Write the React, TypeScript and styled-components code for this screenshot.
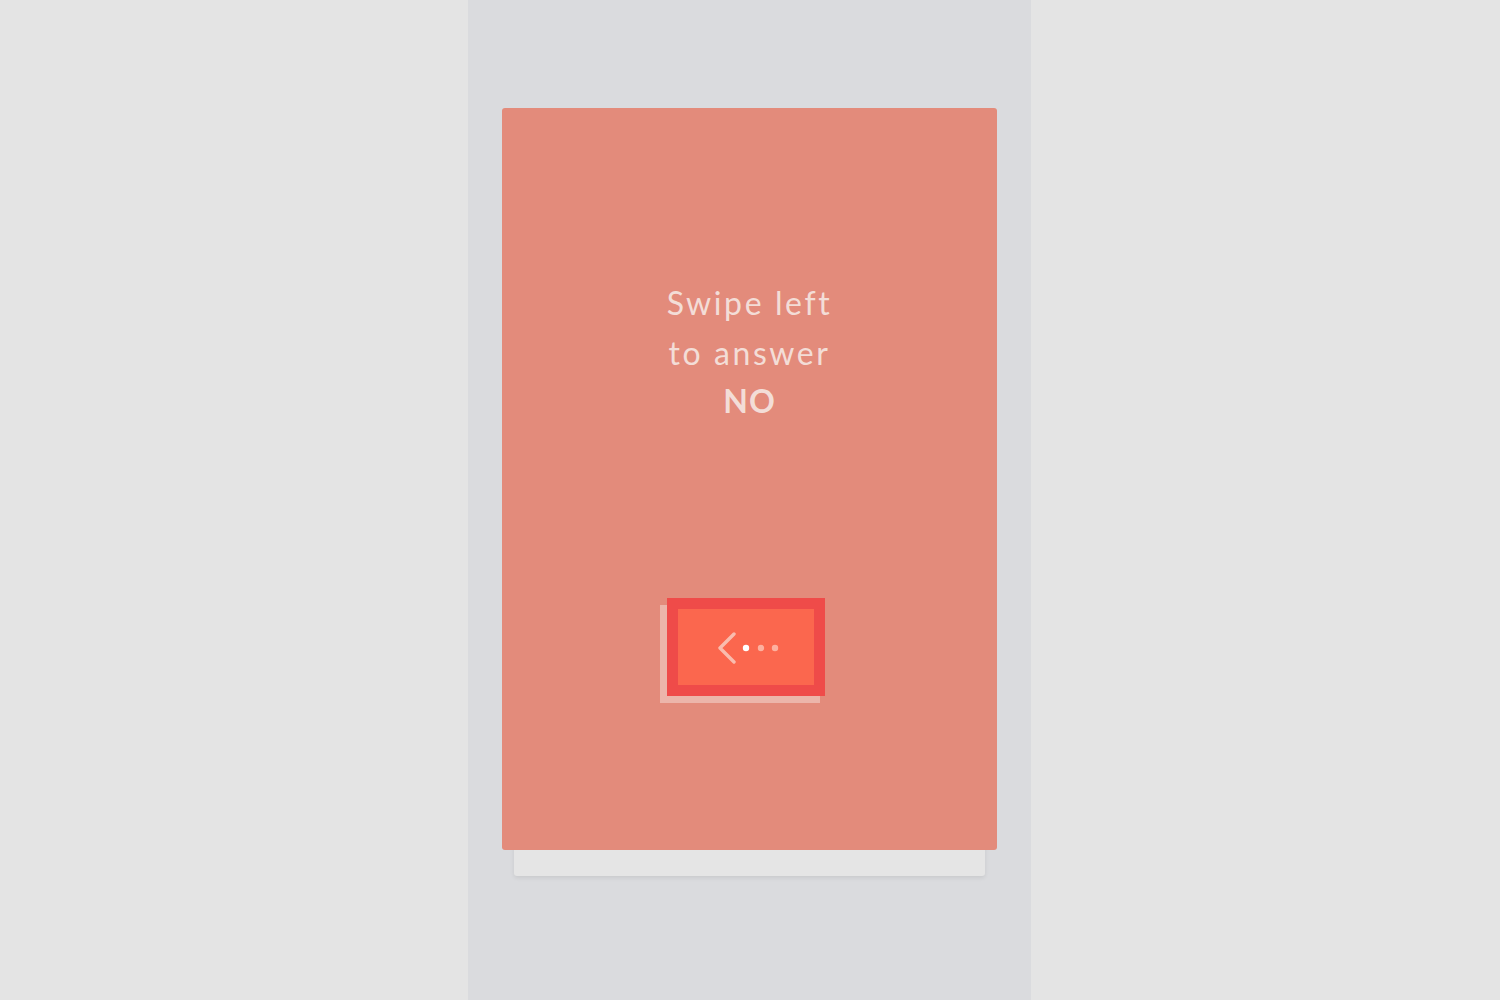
import React from "react";
import styled, { createGlobalStyle } from "styled-components";

const Global = createGlobalStyle`
  html, body { margin: 0; padding: 0; background: #e4e4e4; }
  body { font-family: Lato, "Open Sans", sans-serif; }
`;

const Page = styled.div`
  width: 1500px;
  height: 1000px;
  display: flex;
  background: #e4e4e4;
  padding-left: 468px;
  box-sizing: border-box;
`;

const Column = styled.div`
  width: 563px;
  height: 1000px;
  background: #dadbde;
  display: flex;
  flex-direction: column;
  align-items: center;
  padding-top: 108px;
  box-sizing: border-box;
`;

const Deck = styled.div`
  position: relative;
  width: 495px;
  height: 742px;
`;

const BackCard = styled.div`
  position: absolute;
  left: 12px;
  right: 12px;
  bottom: -26px;
  height: 60px;
  background: #e5e5e5;
  border-radius: 3px;
  box-shadow: 0 2px 4px rgba(0, 0, 0, 0.08);
`;

const Card = styled.div`
  position: relative;
  width: 100%;
  height: 100%;
  background: #e38b7b;
  border-radius: 3px;
  display: flex;
  flex-direction: column;
  align-items: center;
  padding-top: 170px;
  box-sizing: border-box;
`;

const Message = styled.div`
  color: #f3ddd7;
  font-size: 32px;
  line-height: 50px;
  letter-spacing: 2.6px;
  font-weight: 400;
  text-align: center;
`;

const Strong = styled.div`
  font-weight: 700;
  letter-spacing: 1px;
  line-height: 46px;
`;

const ButtonWrap = styled.div`
  position: relative;
  margin-top: 174px;
  margin-left: -7px;
  width: 158px;
  height: 98px;
`;

const ButtonShadow = styled.div`
  position: absolute;
  left: -7px;
  top: 7px;
  width: 160px;
  height: 98px;
  background: #ecb5aa;
`;

const Button = styled.div`
  position: relative;
  width: 158px;
  height: 98px;
  box-sizing: border-box;
  border: 11px solid #ef4b49;
  background: #fb674e;
  display: flex;
  align-items: center;
  justify-content: center;
`;

const Arrow = styled.svg`
  margin-left: 5px;
  margin-top: 2px;
`;

export default function App() {
  return (
    <>
      <Global />
      <Page>
        <Column>
          <Deck>
            <BackCard />
            <Card>
              <Message>
                <div>Swipe left</div>
                <div>to answer</div>
                <Strong>NO</Strong>
              </Message>
              <ButtonWrap>
                <ButtonShadow />
                <Button>
                  <Arrow width="62" height="34" viewBox="0 0 62 34">
                    <polyline
                      points="16,3 2,17 16,31"
                      fill="none"
                      stroke="#f9bcae"
                      strokeWidth="3.4"
                      strokeLinecap="round"
                      strokeLinejoin="round"
                    />
                    <circle cx="28" cy="17" r="3.2" fill="#ffffff" />
                    <circle cx="43" cy="17" r="3.2" fill="#fdb09f" />
                    <circle cx="57" cy="17" r="3.2" fill="#fdb09f" />
                  </Arrow>
                </Button>
              </ButtonWrap>
            </Card>
          </Deck>
        </Column>
      </Page>
    </>
  );
}
